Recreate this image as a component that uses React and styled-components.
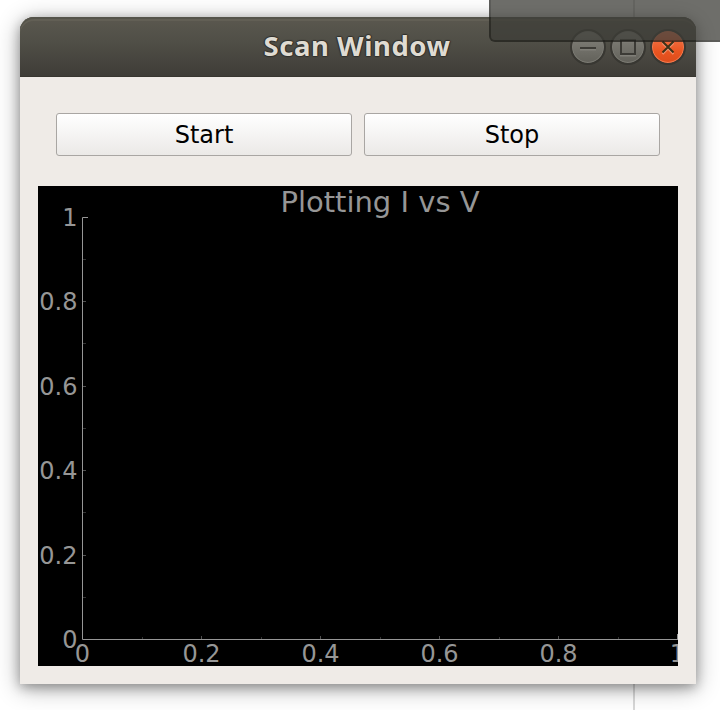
import React from "react";
import styled, { createGlobalStyle } from "styled-components";

const GlobalStyle = createGlobalStyle`
  * { box-sizing: border-box; }
  body { margin: 0; background: #fff; overflow: hidden; }
`;

const Desktop = styled.main`
  position: relative;
  width: 720px;
  height: 710px;
  padding: 17px 24px 26px 20px;
  overflow: hidden;
  background: linear-gradient(#d8d8d8, #d8d8d8) 633px 0 / 2px 100% no-repeat #fff;
  font-family: "DejaVu Sans", sans-serif;
`;

const Window = styled.section`
  display: flex;
  flex-direction: column;
  height: 667px;
  border-radius: 14px 14px 0 0;
  background: #efebe7;
  box-shadow: 0 3px 12px rgba(0, 0, 0, 0.31), 0 4px 25px rgba(0, 0, 0, 0.32);
`;

const TitleBar = styled.header`
  display: grid;
  grid-template-columns: 1fr auto 1fr;
  align-items: center;
  height: 60px;
  padding: 0 10px 0 0;
  border-radius: 14px 14px 0 0;
  background: linear-gradient(#5b584f, #504f47 40%, #3e3c37);
  box-shadow: inset 0 2px #54534a, inset 0 4px #625f55, inset 0 -1px #383630;
`;

const Title = styled.h1`
  grid-column: 2;
  width: 190px;
  margin: 0 0 2px 11px;
  font: 700 27.5px/58px "Noto Sans", sans-serif;
  letter-spacing: 0.55px;
  white-space: nowrap;
  color: #dfdbd2;
  text-shadow: 0 -1px 1px #302f2b, 0 1px 1px #302f2b, -1px 0 1px #302f2b, 1px 0 1px #302f2b;
`;

const Controls = styled.div`
  display: flex;
  justify-content: flex-end;
  gap: 4px;
`;

const Control = styled.button`
  display: flex;
  width: 36px;
  height: 36px;
  padding: 0;
  border: 2px solid #383732;
  border-radius: 50%;
  background: ${(p) => (p.$close ? "linear-gradient(#f47d55, #e95420 65%, #dc4c1b)" : "linear-gradient(#85847d, #62615a)")};
  background-clip: padding-box;
  box-shadow: inset 0 0 0 1px ${(p) => (p.$close ? "#f37b50" : "#7b7a73")};
`;

const Content = styled.div`
  padding: 36px 18px 18px;
`;

const Actions = styled.div`
  display: grid;
  grid-template-columns: 1fr 1fr;
  gap: 12px;
  padding: 0 18px;
  margin-bottom: 30px;
`;

const PushButton = styled.button`
  height: 43px;
  padding: 2px 0 0;
  border: 1px solid #a9a6a3;
  border-radius: 3px;
  background: linear-gradient(#fff, #ebe9e7);
  color: #000;
  font: 24px/39px "DejaVu Sans", sans-serif;
`;

const Plot = styled.svg`
  display: block;
  width: 640px;
  height: 480px;
  background: #000;
  overflow: hidden;
  font: 24px "DejaVu Sans", sans-serif;
  fill: #969696;
`;

const PlotTitle = styled.text`
  font-size: 29px;
`;

const Overlay = styled.div`
  position: absolute;
  top: -8px;
  left: 489px;
  width: 240px;
  height: 50px;
  border: 2px solid rgba(30, 30, 27, 0.72);
  border-radius: 6px;
  background: rgba(60, 60, 55, 0.745);
  background-clip: padding-box;
`;

const ICONS = {
  Minimize: "M8 17H24",
  Maximize: "M9 9H23V23H9Z",
  Close: "M10.5 10.5L21.5 21.5M21.5 10.5L10.5 21.5",
};

function WindowControl({ name }) {
  const close = name === "Close";
  return (
    <Control $close={close} aria-label={name}>
      <svg width="32" height="32" viewBox="0 0 32 32" fill="none" strokeWidth="2">
        <path d={ICONS[name]} stroke={close ? "#f29472" : "#807f78"} transform="translate(0 1.5)" />
        <path d={ICONS[name]} stroke={close ? "#3c3218" : "#3c3b36"} />
      </svg>
    </Control>
  );
}

const X_TICKS = [[0, 44.5], [0.2, 163.5], [0.4, 282.5], [0.6, 401.5], [0.8, 520.5], [1, 639.5]];
const Y_TICKS = [[1, 31.5], [0.8, 115.5], [0.6, 200.5], [0.4, 284.5], [0.2, 369.5], [0, 453.5]];
const X_MINOR = [104.5, 223.5, 342.5, 461.5, 580.5];
const Y_MINOR = [73.5, 157.5, 242.5, 326.5, 411.5];

function Chart() {
  return (
    <Plot viewBox="0 0 640 480">
      <PlotTitle x="342" y="26" textAnchor="middle">Plotting I vs V</PlotTitle>
      <g stroke="#969696">
        <path d="M50 31.5H44.5V453.5H640M639.5 448V454" fill="none" />
        {X_TICKS.slice(1, 5).map(([v, x]) => <path key={v} d={`M${x} 450V453`} stroke="#505050" />)}
        {Y_TICKS.slice(1, 5).map(([v, y]) => <path key={v} d={`M45 ${y}H48`} stroke="#505050" />)}
        {X_MINOR.map((x) => <path key={x} d={`M${x} 451V453`} stroke="#343434" />)}
        {Y_MINOR.map((y) => <path key={y} d={`M45 ${y}H48`} stroke="#343434" />)}
      </g>
      {X_TICKS.map(([v, x]) => <text key={v} x={x} y="476" textAnchor="middle">{v}</text>)}
      {Y_TICKS.map(([v, y]) => <text key={v} x="39.5" y={Math.floor(y) + 9} textAnchor="end">{v}</text>)}
    </Plot>
  );
}

export default function App() {
  return (
    <>
      <GlobalStyle />
      <Desktop>
        <Window>
          <TitleBar>
            <Title>Scan Window</Title>
            <Controls>
              <WindowControl name="Minimize" />
              <WindowControl name="Maximize" />
              <WindowControl name="Close" />
            </Controls>
          </TitleBar>
          <Content>
            <Actions>
              <PushButton>Start</PushButton>
              <PushButton>Stop</PushButton>
            </Actions>
            <Chart />
          </Content>
        </Window>
        <Overlay />
      </Desktop>
    </>
  );
}
